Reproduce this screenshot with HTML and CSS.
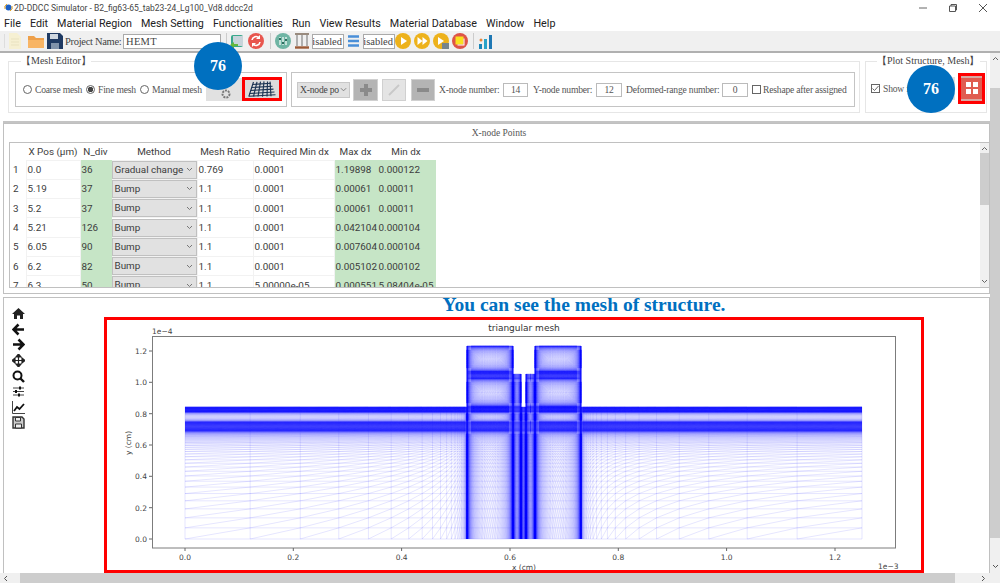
FILE: index.html
```html
<!DOCTYPE html>
<html lang="en">
<head>
<meta charset="utf-8">
<title>2D-DDCC Simulator</title>
<link rel="stylesheet" href="styles.css">
</head>
<body>
<div class="app">
  <header class="titlebar">
    <svg class="app-icon" width="9" height="9" viewBox="0 0 9 9"><circle cx="4.5" cy="4.5" r="3" fill="#1c5fc4"/><path d="M1 6a4 4 0 0 1 2-5" fill="none" stroke="#e2a020"/><path d="M8 3a4 4 0 0 1-2 5" fill="none" stroke="#e2a020"/></svg>
    <span class="title-text">2D-DDCC Simulator - B2_fig63-65_tab23-24_Lg100_Vd8.ddcc2d</span>
    <div class="win-controls">
      <svg width="10" height="10" viewBox="0 0 10 10"><path d="M1 5h8" stroke="#666"/></svg>
      <svg width="10" height="10" viewBox="0 0 10 10"><path d="M1.5 3h6v5.5h-6zM3 3V1.5h5.5V7H7.5" fill="none" stroke="#555"/></svg>
      <svg width="10" height="10" viewBox="0 0 10 10"><path d="M1 1l8 8M9 1l-8 8" stroke="#555"/></svg>
    </div>
  </header>
  <nav class="menubar">
    <span>File</span><span>Edit</span><span>Material Region</span><span>Mesh Setting</span><span>Functionalities</span><span>Run</span><span>View Results</span><span>Material Database</span><span>Window</span><span>Help</span>
  </nav>
  <div class="toolbar">
    <i class="grip"></i>
    <svg class="tool tool-file" width="14" height="16" viewBox="0 0 14 16"><path d="M1 0h8l4 4v12H1z" fill="#f6f0d2"/><path d="M3 6h8M3 9h8M3 12h8" stroke="#e9e2c0"/></svg>
    <svg class="tool tool-folder" width="16" height="15" viewBox="0 0 16 15"><path d="M0 2h6l2 2h8v10H0z" fill="#eea04a"/><path d="M0 6h16v8H0z" fill="#f8b565"/></svg>
    <svg class="tool tool-save" width="16" height="16" viewBox="0 0 16 16"><path d="M0 0h13l3 3v13H0z" fill="#1f3a63"/><path d="M3 1h8v5H3z" fill="#cfd7e0"/><path d="M4 10h8v6H4z" fill="#8093ab"/></svg>
    <label class="project-label">Project Name:</label>
    <span class="field project-field">HEMT</span>
    <i class="sep sep-a"></i>
    <svg class="tool tool-a" width="14" height="15" viewBox="0 0 14 15"><rect x="1" y="1" width="12" height="12" rx="2" fill="#3aa88c"/><rect x="3" y="2" width="10" height="10" fill="#c8d4da"/><path d="M0 11l4 4v-3h4v-2H4V8z" fill="#64b83c"/></svg>
    <svg class="tool tool-b" width="16" height="16" viewBox="0 0 16 16"><circle cx="8" cy="8" r="8" fill="#e8564e"/><path d="M4 7a4 4 0 0 1 7-2M12 9a4 4 0 0 1-7 2" fill="none" stroke="#fff" stroke-width="1.6"/><path d="M12 2v4H8zM4 14v-4h4z" fill="#fff"/></svg>
    <i class="sep sep-b"></i>
    <svg class="tool tool-c" width="16" height="16" viewBox="0 0 16 16"><circle cx="8" cy="8" r="8" fill="#6fb5a4"/><path d="M5 4v8M8 4v8M11 4v8" stroke="#e8f4f0" stroke-width="1.4"/><path d="M4 6h2M7 10h2M10 7h2" stroke="#2f6d60" stroke-width="2"/></svg>
    <svg class="tool tool-d" width="14" height="16" viewBox="0 0 14 16"><path d="M0 1h14" stroke="#7d6a58" stroke-width="1.5"/><path d="M2 2v11M7 2v11M12 2v11" stroke="#9a9a9a" stroke-width="1.5"/><path d="M0 14.5h14" stroke="#9c5a36" stroke-width="2.4"/></svg>
    <span class="field short-field field-d">Disabled</span>
    <svg class="tool tool-e" width="11" height="12" viewBox="0 0 11 12"><path d="M0 1.5h11M0 6h11M0 10.500h11" stroke="#4a8fd8" stroke-width="2.400"/></svg>
    <span class="field short-field field-e">Disabled</span>
    <svg class="tool tool-f" width="16" height="16" viewBox="0 0 16 16"><circle cx="8" cy="8" r="8" fill="#edb21c"/><path d="M6 4l6 4-6 4z" fill="#fff"/></svg>
    <svg class="tool tool-g" width="16" height="16" viewBox="0 0 16 16"><circle cx="8" cy="8" r="8" fill="#edb21c"/><path d="M3.500 4l5 4-5 4zM8.500 4l5 4-5 4z" fill="#fff"/></svg>
    <svg class="tool tool-g" width="16" height="16" viewBox="0 0 16 16"><circle cx="8" cy="8" r="8" fill="#edb21c"/><path d="M5 4l6 4-6 4z" fill="#fff"/><rect x="9" y="10" width="7" height="6" fill="#77848c"/></svg>
    <svg class="tool tool-h" width="16" height="16" viewBox="0 0 16 16"><circle cx="8" cy="8" r="8" fill="#de5448"/><rect x="3.500" y="3.500" width="8" height="8" fill="#f9e11e"/><path d="M11.500 5.500h1v7h-7v-1h6z" fill="#fff"/></svg>
    <i class="sep sep-c"></i>
    <svg class="tool tool-i" width="14" height="15" viewBox="0 0 14 15"><rect y="10" width="3" height="5" fill="#1b86b8"/><rect x="5" y="5" width="3" height="10" fill="#2aa3c8"/><rect x="10" y="1" width="3" height="14" fill="#1f78b4"/><circle cx="2" cy="6" r="1.500" fill="#e8873c"/></svg>
  </div>

  <div class="workspace">
    <main class="panes">
      <section class="tools">
        <fieldset class="group group-mesh">
          <legend>【Mesh Editor】</legend>
          <div class="group-row">
            <div class="inset inset-mode">
              <span class="radio"></span><span class="opt opt-coarse">Coarse mesh</span>
              <span class="radio radio-on"></span><span class="opt opt-fine">Fine mesh</span>
              <span class="radio"></span><span class="opt opt-manual">Manual mesh</span>
              <button class="icon-btn btn-gear" type="button">
                <svg width="12" height="12" viewBox="0 0 12 12"><circle cx="6" cy="6" r="3.500" fill="none" stroke="#777" stroke-width="2" stroke-dasharray="2 1"/></svg>
              </button>
              <button class="icon-btn btn-mesh" type="button">
                <svg width="28" height="16" viewBox="0 0 28 16"><g fill="none" stroke="#1c3554" stroke-width="1.150"><path d="M5.500 1L1 15M9 .8L5.500 15.300M12.500.6L10 15.500M16 .4l-1.500 15.300M19.500.4L19 15.500M22 .6l1 14.700"/><path d="M4.500 3.500L23 2.300M3.500 6.500l21-1.300M2.500 9.500l23-1.400M1.500 12.500l25-1.500M.5 15.300l27-1.600"/></g></svg>
              </button>
            </div>
            <div class="inset inset-nodes">
              <span class="combo">X-node po<svg width="7" height="5" viewBox="0 0 8 5"><path d="M1 1l3 3 3-3" fill="none" stroke="#777"/></svg></span>
              <button class="square-btn sq-add" type="button"><svg width="14" height="14" viewBox="0 0 14 14"><path d="M7 1v12M1 7h12" stroke="#8a8a8a" stroke-width="4"/></svg></button>
              <button class="square-btn sq-edit" type="button"><svg width="14" height="14" viewBox="0 0 14 14"><path d="M2 12L12 2" stroke="#c8c8c8" stroke-width="1.800"/></svg></button>
              <button class="square-btn sq-del" type="button"><svg width="14" height="14" viewBox="0 0 14 14"><path d="M1 7h12" stroke="#8a8a8a" stroke-width="4"/></svg></button>
              <span class="opt opt-xn">X-node number:</span><span class="num num-x">14</span>
              <span class="opt opt-yn">Y-node number:</span><span class="num num-y">12</span>
              <span class="opt opt-dn">Deformed-range number:</span><span class="num num-d">0</span>
              <span class="check"></span>
              <span class="opt opt-re">Reshape after assigned</span>
            </div>
          </div>
        </fieldset>
        <fieldset class="group group-plot">
          <legend>【Plot Structure, Mesh】</legend>
          <div class="plot-row">
            <span class="check check-on"><svg width="9" height="9" viewBox="0 0 9 9"><path d="M1.500 4.500l2 2 4-4.500" fill="none" stroke="#666"/></svg></span>
            <span class="opt opt-show">Show figure</span>
            <span class="ghost-btn"></span>
            <button class="grid-btn" type="button"><svg width="12" height="12" viewBox="0 0 12 12"><path d="M0 0h5v5H0zM7 0h5v5H7zM0 7h5v5H0zM7 7h5v5H7z" fill="#fff"/></svg></button>
          </div>
        </fieldset>
      </section>

      <section class="table-pane">
        <div class="pane-title">X-node Points</div>
        <div class="table-wrap">
          <div class="table-clip">
            <table class="points">
              <colgroup><col class="c0"><col class="c1"><col class="c2"><col class="c3"><col class="c4"><col class="c5"><col class="c6"><col class="c7"></colgroup>
              <thead><tr><th></th><th>X Pos (µm)</th><th>N_div</th><th>Method</th><th>Mesh Ratio</th><th>Required Min dx</th><th>Max dx</th><th>Min dx</th></tr></thead>
              <tbody>
                <tr><td class="rh">1</td><td>0.0</td><td class="g">36</td><td class="m"><span class="sel">Gradual change</span></td><td>0.769</td><td>0.0001</td><td class="g">1.19898</td><td class="g">0.000122</td></tr>
                <tr><td class="rh">2</td><td>5.19</td><td class="g">37</td><td class="m"><span class="sel">Bump</span></td><td>1.1</td><td>0.0001</td><td class="g">0.00061</td><td class="g">0.00011</td></tr>
                <tr><td class="rh">3</td><td>5.2</td><td class="g">37</td><td class="m"><span class="sel">Bump</span></td><td>1.1</td><td>0.0001</td><td class="g">0.00061</td><td class="g">0.00011</td></tr>
                <tr><td class="rh">4</td><td>5.21</td><td class="g">126</td><td class="m"><span class="sel">Bump</span></td><td>1.1</td><td>0.0001</td><td class="g">0.042104</td><td class="g">0.000104</td></tr>
                <tr><td class="rh">5</td><td>6.05</td><td class="g">90</td><td class="m"><span class="sel">Bump</span></td><td>1.1</td><td>0.0001</td><td class="g">0.007604</td><td class="g">0.000104</td></tr>
                <tr><td class="rh">6</td><td>6.2</td><td class="g">82</td><td class="m"><span class="sel">Bump</span></td><td>1.1</td><td>0.0001</td><td class="g">0.005102</td><td class="g">0.000102</td></tr>
                <tr><td class="rh">7</td><td>6.3</td><td class="g">50</td><td class="m"><span class="sel">Bump</span></td><td>1.1</td><td>5.00000e-05</td><td class="g">0.000551</td><td class="g">5.08404e-05</td></tr>
              </tbody>
            </table>
          </div>
          <div class="table-scroll">
            <svg width="7" height="5" viewBox="0 0 7 5"><path d="M1 4l2.500-2.500L6 4" fill="none" stroke="#666"/></svg>
            <i class="table-thumb"></i>
            <svg class="arrow-end" width="7" height="5" viewBox="0 0 7 5"><path d="M1 1l2.500 2.500L6 1" fill="none" stroke="#666"/></svg>
          </div>
        </div>
      </section>

      <section class="plot-pane">
        <div class="nav-tools">
          <svg width="13" height="13" viewBox="0 0 13 13"><path d="M6.500 1L0 7h2v5h3V8.500h3V12h3V7h2z" fill="#222"/></svg>
          <svg width="13" height="13" viewBox="0 0 13 13"><path d="M6.500 1.500L1.500 6.500l5 5M2 6.500h10" fill="none" stroke="#111" stroke-width="2.600"/></svg>
          <svg width="13" height="13" viewBox="0 0 13 13"><path d="M6.500 1.500l5 5-5 5M11 6.500H1" fill="none" stroke="#111" stroke-width="2.600"/></svg>
          <svg width="13" height="13" viewBox="0 0 13 13"><path d="M6.500 0l2.500 3H4zM6.500 13L4 10h5zM0 6.500L3 4v5zM13 6.500L10 4v5zM6.500 2v9M2 6.500h9" fill="#222" stroke="#222" stroke-width="1.200"/></svg>
          <svg width="13" height="13" viewBox="0 0 13 13"><circle cx="5.500" cy="5.500" r="4" fill="none" stroke="#111" stroke-width="2"/><path d="M8.500 8.500l3.500 3.500" stroke="#111" stroke-width="2.400"/></svg>
          <svg width="13" height="13" viewBox="0 0 13 13"><path d="M1 3h11M1 6.500h11M1 10h11" stroke="#444"/><path d="M8 1.500v3M4 5v3M7 8.500v3" stroke="#111" stroke-width="2"/></svg>
          <svg width="13" height="13" viewBox="0 0 13 13"><path d="M.5 0v12.500H13" fill="none" stroke="#444"/><path d="M2 10l3-4 2.500 2L12 3" fill="none" stroke="#111" stroke-width="1.800"/></svg>
          <svg width="13" height="13" viewBox="0 0 13 13"><path d="M1 1h9l2 2v9H1z" fill="#ccc" stroke="#333" stroke-width="1.400"/><path d="M3.500 1.500h5V5h-5zM3.500 8h6v4h-6z" fill="#eee" stroke="#333"/></svg>
        </div>
        <div class="plot-column">
          <h2 class="plot-heading">You can see the mesh of structure.</h2>
          <figure class="figure">
            <svg class="axes" width="814" height="250" viewBox="107 320 814 250">
              <rect class="frame" x="152.500" y="336.500" width="743" height="211.500"/>
              <g class="ticks">
                <path d="M185 548v3M293.300 548v3M401.600 548v3M510 548v3M618.300 548v3M726.600 548v3M835 548v3"/>
                <path d="M149 539h3M149 507.700h3M149 476.300h3M149 445h3M149 413.700h3M149 382.300h3M149 351h3"/>
              </g>
              <text class="label" x="524" y="331" text-anchor="middle">triangular mesh</text>
              <text class="tick" x="152" y="334">1e−4</text>
              <text class="tick" x="878" y="569">1e−3</text>
              <g class="tick" text-anchor="middle">
                <text x="185" y="560">0.0</text><text x="293.300" y="560">0.2</text><text x="401.600" y="560">0.4</text><text x="510" y="560">0.6</text><text x="618.300" y="560">0.8</text><text x="726.600" y="560">1.0</text><text x="835" y="560">1.2</text>
              </g>
              <g class="tick" text-anchor="end">
                <text x="147" y="542">0.0</text><text x="147" y="510.700">0.2</text><text x="147" y="479.300">0.4</text><text x="147" y="448">0.6</text><text x="147" y="416.700">0.8</text><text x="147" y="385.300">1.0</text><text x="147" y="354">1.2</text>
              </g>
              <text class="tick" x="524" y="569.500" text-anchor="middle">x (cm)</text>
              <text class="tick" transform="translate(131 443) rotate(-90)" text-anchor="middle">y (cm)</text>
            </svg>
            <canvas id="mesh" class="mesh" width="742" height="210"></canvas>
          </figure>
        </div>
      </section>
    </main>
    <aside class="vscroll">
      <svg width="7" height="5" viewBox="0 0 7 5"><path d="M1 4l2.500-2.500L6 4" fill="none" stroke="#666"/></svg>
      <i class="vthumb"></i>
      <svg width="7" height="5" viewBox="0 0 7 5"><path d="M1 1l2.500 2.500L6 1" fill="none" stroke="#555"/></svg>
    </aside>
  </div>
  <div class="hscroll">
    <svg width="5" height="7" viewBox="0 0 5 7"><path d="M4 1L1.500 3.500 4 6" fill="none" stroke="#555"/></svg>
    <i class="hthumb"></i>
    <svg width="5" height="7" viewBox="0 0 5 7"><path d="M1 1l2.500 2.500L1 6" fill="none" stroke="#555"/></svg>
  </div>
  <div class="badge badge-left">76</div>
  <div class="badge badge-right">76</div>
</div>
<script src="mesh.js"></script>
</body>
</html>
```

FILE: styles.css
```css
* { box-sizing: border-box; }
html, body { margin: 0; height: 100%; background: #fff; overflow: hidden; }
.app { position: relative; width: 1000px; height: 583px; display: flex; flex-direction: column; font-family: Roboto, "Noto Sans", sans-serif; color: #333; overflow: hidden; }

.titlebar { height: 15px; display: flex; align-items: center; padding-left: 4px; font-size: 8.500px; color: #444; }
.app-icon { margin-right: 1px; }
.title-text { white-space: nowrap; }
.win-controls { margin-left: auto; display: flex; gap: 20px; padding-right: 12px; }

.menubar { height: 16px; display: flex; align-items: center; padding-left: 4px; gap: 9px; font-size: 10.750px; color: #222; }

.toolbar { height: 22px; display: flex; align-items: center; background: #f0f0f0; border-bottom: 2px solid #b0b0b0; font-family: "Liberation Serif", serif; font-size: 10px; }
.grip { width: 1px; height: 14px; background: #ddd; margin: 0 0 0 4px; }
.tool { flex: none; }
.tool-file { margin-left: 3px; }
.tool-folder { margin-left: 6px; }
.tool-save { margin-left: 3px; }
.project-label { margin-left: 2px; width: 58px; font-size: 10.500px; letter-spacing: -.3px; color: #444; white-space: nowrap; }
.field { display: block; background: #fff; border: 1px solid #aaa; height: 15px; line-height: 13px; color: #444; white-space: nowrap; overflow: hidden; }
.project-field { width: 98px; padding-left: 2px; font-size: 10.500px; letter-spacing: .3px; }
.short-field { width: 32px; direction: rtl; font-size: 10.500px; padding-right: 1px; }
.sep { width: 1px; height: 16px; background: #ccc; flex: none; }
.sep-a { margin-left: 5px; }
.tool-a { margin-left: 3px; }
.tool-b { margin-left: 4px; }
.sep-b { margin-left: 6px; }
.tool-c { margin-left: 4px; }
.tool-d { margin-left: 4px; }
.field-d { margin-left: 3px; }
.tool-e { margin-left: 4px; }
.field-e { margin-left: 4px; }
.tool-f { margin-left: 0; }
.tool-g { margin-left: 3px; }
.tool-h { margin-left: 3px; }
.sep-c { margin-left: 5px; }
.tool-i { margin-left: 5px; }

.workspace { height: 520px; display: flex; }
.panes { width: 990px; display: flex; flex-direction: column; padding-left: 3px; }

.tools { height: 70px; display: flex; padding: 2px 0 0 5px; gap: 5px; border-bottom: 2px solid #c4c4c4; font-family: "Liberation Serif", serif; font-size: 9.600px; letter-spacing: -.2px; color: #555; }
.group { margin: 0; min-width: 0; border: 1px solid #e6e6e6; padding: 0; height: 58px; }
.group legend { padding: 0; margin-left: 6px; font-size: 10px; line-height: 12px; color: #444; letter-spacing: 0; }
.group-mesh { width: 852px; padding: 5px 0 0 6px; }
.group-plot { width: 122px; padding: 4px 0 0 5px; }
.group-row { display: flex; gap: 4px; }
.inset { height: 35px; border: 1px solid #c4c4c4; display: flex; align-items: center; }
.inset-mode { width: 272px; padding-left: 7px; }
.inset-nodes { width: 564px; padding-left: 5px; }
.radio { flex: none; width: 9px; height: 9px; border: 1px solid #666; border-radius: 50%; background: #fff; }
.radio-on { background: radial-gradient(circle, #444 0 2.500px, #fff 3px); }
.opt { white-space: nowrap; }
.opt-coarse { margin: 0 5px 0 3px; width: 46px; }
.opt-fine { margin: 0 5px 0 3px; width: 37px; }
.opt-manual { margin: 0 6px 0 3px; width: 48px; }
.icon-btn { padding: 0; border: 0; background: #e1e1e1; display: flex; align-items: center; justify-content: center; }
.btn-gear { width: 36px; height: 23px; }
.btn-gear svg { margin: 8px 0 0 4px; }
.btn-mesh { width: 40px; height: 24px; border: 3px solid #f00; margin: -2px 0 0 0; background: #dcdcdc; }

.combo { width: 53px; height: 16px; background: #e1e1e1; border: 1px solid #c8c8c8; display: flex; align-items: center; justify-content: space-between; padding: 0 2px; white-space: nowrap; color: #444; flex: none; }
.square-btn { flex: none; padding: 0; border: 1px solid #d0d0d0; height: 22px; display: flex; align-items: center; justify-content: center; background: #b4b4b4; }
.sq-add { width: 25px; margin-left: 3px; }
.sq-edit { width: 24px; margin-left: 4px; background: #e4e4e4; }
.sq-del { width: 24px; margin-left: 5px; }
.opt-xn { margin-left: 4px; width: 58px; }
.num { flex: none; height: 14px; border: 1px solid #bbb; text-align: center; line-height: 12px; background: #fff; color: #555; }
.num-x { width: 25px; margin-left: 6px; }
.opt-yn { margin-left: 5px; width: 58px; }
.num-y { width: 26px; margin-left: 5px; }
.opt-dn { margin-left: 4px; width: 91px; }
.num-d { width: 26px; margin-left: 5px; }
.check { flex: none; width: 9px; height: 9px; border: 1px solid #666; background: #fff; display: block; margin-left: 4px; }
.check svg { display: block; margin: -1px; }
.opt-re { margin-left: 2px; }
.plot-row { display: flex; align-items: center; height: 30px; margin-top: 2px; }
.check-on { margin-left: 0; }
.opt-show { margin-left: 3px; width: 66px; flex: none; }
.ghost-btn { width: 6px; height: 23px; background: #e1e1e1; flex: none; margin-right: 3px; }
.grid-btn { flex: none; width: 27px; height: 31px; padding: 0; border: 3px solid #f00; background: #e05c50; display: flex; align-items: center; justify-content: center; box-shadow: inset 0 2px 0 #d8a8a2, inset 0 -2px 0 #d8a8a2; }

.table-pane { height: 171px; border: 1px solid #c0c0c0; padding: 0 0 0 5px; display: flex; flex-direction: column; }
.pane-title { height: 18px; line-height: 18px; text-align: center; font-family: "Liberation Serif", serif; font-size: 9.500px; color: #555; flex: none; }
.table-wrap { width: 981px; height: 146px; display: flex; border: 1px solid #c0c0c0; }
.table-clip { flex: 1; overflow: hidden; min-width: 0; }
.points { border-collapse: collapse; table-layout: fixed; width: 425px; font-size: 9.900px; line-height: 13px; color: #3c3c3c; }
.c0 { width: 16px; } .c1 { width: 54px; } .c2 { width: 31px; } .c3 { width: 86px; } .c4 { width: 56px; } .c5 { width: 81px; } .c6 { width: 43px; } .c7 { width: 58px; }
.points th { height: 17px; font-weight: 400; padding: 0; white-space: nowrap; }
.points td { height: 19.300px; padding: 0 1px; border: 1px solid #f2f2f2; white-space: nowrap; overflow: hidden; }
.points .rh { border: 0; padding-left: 3px; }
.points .g { background: #c6e5c6; border-color: #c6e5c6; }
.points .m { padding: 0; }
.sel { display: block; height: 18px; line-height: 16px; padding-left: 2px; background: #e1e1e1 url("data:image/svg+xml,%3Csvg xmlns='http://www.w3.org/2000/svg' width='7' height='5'%3E%3Cpath d='M1 1l2.500 2.500L6 1' fill='none' stroke='%23777'/%3E%3C/svg%3E") no-repeat right 3px center; border: 1px solid #c0c0c0; }
.table-scroll { width: 9px; background: #f0f0f0; display: flex; flex-direction: column; align-items: center; padding-top: 3px; flex: none; }
.table-thumb { display: block; width: 9px; height: 52px; background: #cdcdcd; margin-top: 2px; }
.arrow-end { margin-top: auto; margin-bottom: 3px; }

.plot-pane { margin-top: 3px; height: 276px; border: 1px solid #c0c0c0; border-bottom: 0; display: flex; }
.nav-tools { width: 100px; display: flex; flex-direction: column; align-items: flex-start; gap: 2.630px; padding: 9px 0 0 8px; flex: none; }
.nav-tools svg { flex: none; }
.plot-column { width: 820px; display: flex; flex-direction: column; }
.plot-heading { margin: 0; height: 19px; padding-left: 140px; text-align: center; font-family: "Liberation Serif", serif; font-size: 19.500px; line-height: 13px; font-weight: 700; color: #0070c0; white-space: nowrap; }
.figure { position: relative; margin: 0; width: 820px; height: 256px; border: 3px solid #f00; background: #fff; }
.axes { display: block; }
.frame { fill: none; stroke: #7c7c7c; }
.ticks path { stroke: #666; fill: none; }
.label { font: 9px "DejaVu Sans", sans-serif; fill: #333; }
.tick { font: 7.500px "DejaVu Sans", sans-serif; fill: #444; }
.mesh { position: absolute; left: 46px; top: 17px; width: 742px; height: 210px; filter: blur(.4px); }

.vscroll { width: 10px; background: #f0f0f0; display: flex; flex-direction: column; align-items: center; justify-content: space-between; padding: 3px 0 4px; position: relative; }
.vthumb { position: absolute; left: 0; top: 35px; width: 10px; height: 450px; background: #cdcdcd; }
.hscroll { height: 10px; background: #f0f0f0; display: flex; align-items: center; padding: 0 14px 0 3px; }
.hthumb { display: block; width: 935px; height: 10px; background: #cdcdcd; margin: 0 auto 0 12px; }

.badge { position: absolute; width: 48px; height: 48px; border-radius: 50%; background: #0070c0; color: #fff; display: flex; align-items: center; justify-content: center; font-family: "Liberation Serif", serif; font-weight: 700; font-size: 16px; }
.badge-left { left: 194px; top: 42px; }
.badge-right { left: 907px; top: 65px; }
```

FILE: mesh.js
```js
(function () {
  var canvas = document.getElementById('mesh');
  var ctx = canvas.getContext('2d');
  var OX = 153, OY = 337;

  // Nodes clustered at both ends: spacing grows by `ratio` towards the middle.
  function bump(a, b, n, ratio) {
    var half = Math.round(n / 2), sizes = [], total = 0, d = 1, i;
    for (i = 0; i < half; i++) { sizes.push(d); total += d; d *= ratio; }
    var out = [a], p = a, unit = (b - a) / 2 / total;
    for (i = 0; i < half; i++) { p += sizes[i] * unit; out.push(p); }
    for (i = half - 1; i >= 0; i--) { p += sizes[i] * unit; out.push(p); }
    return out;
  }
  function geometric(start, d0, ratio, n, dir) {
    var out = [start], p = start, d = d0;
    for (var i = 0; i < n; i++) { p += dir * d; out.push(p); d *= ratio; }
    return out;
  }
  function scale(arr, a, b) {
    var lo = arr[0], hi = arr[arr.length - 1];
    return arr.map(function (v) { return a + (v - lo) / (hi - lo) * (b - a); });
  }
  function join() {
    var seen = {}, out = [];
    for (var i = 0; i < arguments.length; i++) {
      arguments[i].forEach(function (v) {
        var key = v.toFixed(3);
        if (!seen[key]) { seen[key] = 1; out.push(v); }
      });
    }
    return out.sort(function (a, b) { return a - b; });
  }

  var leftX = scale(geometric(185, 65, 0.769, 36, 1), 185, 467);
  var rightX = scale(geometric(862, 65, 0.769, 36, -1).reverse(), 581, 862);
  var gate1 = bump(467, 513, 126, 1.1);
  var stem1 = bump(513, 521, 90, 1.1);
  var mid = bump(521, 526, 82, 1.1);
  var stem2 = bump(526, 535, 90, 1.1);
  var gate2 = bump(535, 581, 126, 1.1);
  var xAll = join(leftX, gate1, stem1, mid, stem2, gate2, rightX);

  var yBase = join(
    scale(geometric(539, 11, 0.898, 42, -1).reverse(), 431, 539),
    bump(422, 431, 75, 1.01),
    bump(412, 422, 24, 1.22),
    bump(407, 412, 60, 1.01)
  );
  var yLow = join(bump(378, 407, 70, 1.1), bump(374, 378, 30, 1.01));
  var yHigh = join(bump(372, 374, 20, 1.01), bump(346, 372, 70, 1.1));

  function mesh(xs, ys) {
    var i, j;
    for (i = 0; i < xs.length; i++) {
      line(xs[i], ys[0], xs[i], ys[ys.length - 1]);
    }
    for (j = 0; j < ys.length; j++) {
      line(xs[0], ys[j], xs[xs.length - 1], ys[j]);
    }
    for (i = 0; i < xs.length - 1; i++) {
      for (j = 0; j < ys.length - 1; j++) {
        if (xs[i + 1] - xs[i] < 0.4 && ys[j + 1] - ys[j] < 0.4) { continue; }
        line(xs[i], ys[j + 1], xs[i + 1], ys[j]);
      }
    }
  }
  function line(x1, y1, x2, y2) {
    ctx.beginPath();
    ctx.moveTo(x1 - OX, y1 - OY);
    ctx.lineTo(x2 - OX, y2 - OY);
    ctx.stroke();
  }

  ctx.strokeStyle = 'rgba(0,0,255,0.15)';
  ctx.lineWidth = 0.7;
  mesh(xAll, yBase);
  mesh(join(gate1, stem1), yLow);
  mesh(join(stem2, gate2), yLow);
  mesh(gate1, yHigh);
  mesh(gate2, yHigh);
})();
```
